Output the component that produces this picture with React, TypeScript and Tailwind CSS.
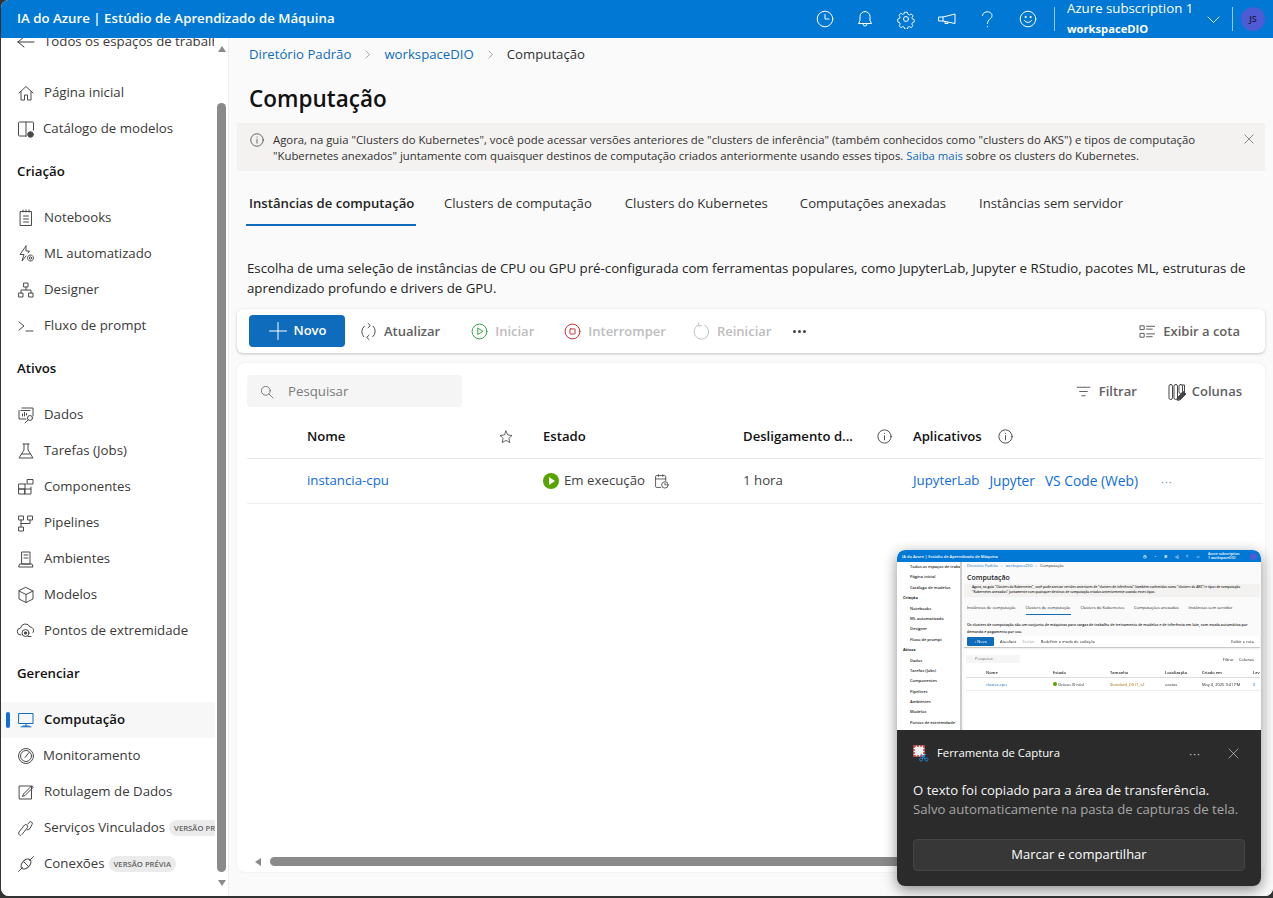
import React from 'react'

type IconProps = { size?: number; className?: string; children?: React.ReactNode }

const Svg: React.FC<IconProps> = ({ size = 20, className, children }) => (
  <svg
    width={size}
    height={size}
    viewBox="0 0 20 20"
    fill="none"
    stroke="currentColor"
    strokeWidth={1}
    strokeLinecap="round"
    strokeLinejoin="round"
    className={`shrink-0 ${className || ''}`}
  >
    {children}
  </svg>
)

const icons: Record<string, React.ReactNode> = {
  back: <path d="M2 10h16M2 10l6-5M2 10l6 5" />,
  home: <path d="M3 10 10 3.500 17 10M5 8.500V17h3.500v-5h3v5H15V8.500" />,
  catalog: (
    <>
      <path d="M10 17H3.500a1 1 0 0 1-1-1V4a1 1 0 0 1 1-1H10v14ZM10 3h6.500a1 1 0 0 1 1 1v7" />
      <circle cx="14.500" cy="15.500" r="2.800" fill="currentColor" />
    </>
  ),
  notebook: <path d="M4.500 3.500h11v14h-11zM7 2v2M10 2v2M13 2v2M7.500 8h5M7.500 11h5M7.500 14h5" />,
  ml: (
    <>
      <path d="M10 2 4 10.500h4L6 17l4-5M10 2v5h3.500l-1.500 2" />
      <circle cx="14.500" cy="14" r="1.200" />
      <circle cx="14.500" cy="14" r="3" strokeDasharray="1.500 0.800" />
    </>
  ),
  designer: <path d="M8 3h4v4H8zM3 13h4v4H3zM13 13h4v4h-4zM10 7v3M5 13v-3h10v3" />,
  prompt: <path d="m3 6 5 4-5 4M10 15h7" />,
  dados: (
    <>
      <path d="M6 3h11v8M3 5.500V14h7M5 5.500h9" />
      <path d="M6.500 11V9M8.500 11V7.500M10.500 10V8.500" />
      <circle cx="14" cy="13" r="2.500" />
      <path d="m12 15-3 3" />
    </>
  ),
  flask: <path d="M7 3h6M8 3v6l-5 8h14l-5-8V3M5.500 13h9" />,
  components: <path d="M3 7h6v5H3zM3 12h6v5H3zM9 12h6v5H9zM15 12v-2M11.500 2.500h5.500v4.500h-5.500zM9 7h1" />,
  pipelines: <path d="M3 3h4.500v4H3zM12 3h4.500v4H12zM3 14h4.500v4H3zM5 7v7M5 10.500h9V7" />,
  env: <path d="M6 3h8v12H6zM4 15h12l1 3H3zM8 6h4M8 9h4" />,
  cube: <path d="M10 2.500 17 6v8l-7 3.500L3 14V6zM3 6l7 3.500L17 6M10 9.500v8" />,
  endpoint: (
    <>
      <path d="M5 14a3.500 3.500 0 0 1-.5-7A5 5 0 0 1 14 6a3.500 3.500 0 0 1 3 5.500" />
      <circle cx="9.500" cy="12" r="3.500" />
      <circle cx="9.500" cy="12" r="1.200" fill="currentColor" />
      <path d="M12 15.500h3" />
    </>
  ),
  compute: <path d="M3 3.500h14v10H3zM10 13.500V16M5 16.800h10M7 16h6" />,
  gauge: (
    <>
      <circle cx="10" cy="10" r="7.500" />
      <circle cx="10" cy="10" r="5.500" />
      <path d="m9 11.500 4-5" />
    </>
  ),
  label: <path d="M3.500 4h12v13h-12zM15.500 4 7.500 12l-1 2.500 2.500-1L17 5.500z" />,
  linked: <path d="M4.500 17.500a2.200 2.200 0 0 1-1.500-3.500l5.500-7a2 2 0 0 1 3 2.500l-5.500 7M11 12l3-1.500 2-4a1.800 1.800 0 0 0-3-2l-1 1.500" />,
  plug: (
    <>
      <path d="M2.500 17.500 6.500 13.500M13.500 6.500l4-4" />
      <ellipse cx="10" cy="10" rx="6" ry="3.800" transform="rotate(-45 10 10)" />
      <path d="M8 8l4 4" />
    </>
  ),
  clock: (
    <>
      <circle cx="10" cy="10" r="7.800" />
      <path d="M10 5.500V10h4" />
    </>
  ),
  bell: <path d="M10 2.500a5 5 0 0 0-5 5v4L3.500 14.500h13L15 11.500v-4a5 5 0 0 0-5-5ZM8 15a2 2 0 0 0 4 0" />,
  gear: (
    <>
      <circle cx="10" cy="10" r="2.500" />
      <path d="M8.500 2.500h3l.5 2.200 1.800.8 2-1.200 2 2.200-1.200 2 .5 1.500 2 .6v2.800l-2 .6-.6 1.600 1.200 2-2.100 2-2-1.200-1.600.7-.5 2.100h-3l-.5-2.100-1.600-.7-2 1.200-2.100-2 1.200-2-.6-1.600-2-.6V9.900l2-.6.5-1.500-1.200-2 2-2.200 2 1.200 1.800-.8z" transform="translate(1 1) scale(.9)" />
    </>
  ),
  megaphone: <path d="M2 8h4L18 5v9.500L6 12H2zM6 8v4M8 12.500v2h3v-1.200" />,
  help: <path d="M5.500 6.500C5.500 1.500 15 1.500 15 6.500c0 3.500-4.500 3.500-4.500 8M10.500 17.500v.3" />,
  smile: (
    <>
      <circle cx="10" cy="10" r="7.800" />
      <path d="M6.500 11.500c1.800 2.600 5.200 2.600 7 0" />
      <circle cx="7.500" cy="8" r=".6" fill="currentColor" />
      <circle cx="12.500" cy="8" r=".6" fill="currentColor" />
    </>
  ),
  chevron: <path d="m3.500 7 6.500 6.500L16.500 7" />,
  plus: <path d="M10 1.500v17M1.500 10h17" />,
  refresh: (
    <>
      <path d="M5.500 4.500a7.500 7.500 0 0 0-.5 11M14.500 15.500a7.500 7.500 0 0 0 .5-11" />
      <path d="M9.500 1.500 12 3.800 9.500 6M10.500 14 8 16.200l2.500 2.300" />
    </>
  ),
  start: (
    <>
      <circle cx="10" cy="10" r="7.800" />
      <path d="M8.200 6.800v6.400l5-3.200z" />
    </>
  ),
  stop: (
    <>
      <circle cx="10" cy="10" r="7.800" />
      <rect x="7.300" y="7.300" width="5.400" height="5.400" rx=".6" />
    </>
  ),
  restart: <path d="M7 3a7.800 7.800 0 1 0 6.500.3M7 1v3h3" />,
  quota: <path d="M2.500 4h4v4h-4zM2.500 12h4v4h-4zM9 4.500h8.500M9 7.500h6M9 12.500h8.500M9 15.500h6" />,
  search: (
    <>
      <circle cx="8.500" cy="8.500" r="5.500" />
      <path d="m12.500 12.500 5 5" />
    </>
  ),
  filter: <path d="M2.500 5h15M5.500 10h9M8 15h4" />,
  columns: (
    <>
      <rect x="2" y="2.500" width="3.500" height="15" rx="1.700" />
      <rect x="7" y="2.500" width="3.500" height="15" rx="1.700" />
      <rect x="12" y="2.500" width="3.500" height="9" rx="1.700" />
      <path d="M15.500 3h2v8" />
      <path d="m10.500 18 .5-3 5.500-5.500 2.500 2.500-5.500 5.500z" fill="currentColor" />
    </>
  ),
  star: <path d="m10 2.500 2.300 5 5.200.6-3.900 3.500 1.100 5.400L10 14.200 5.300 17l1.100-5.400-3.900-3.500 5.200-.6z" />,
  info: (
    <>
      <circle cx="10" cy="10" r="7.800" />
      <path d="M10 9v5M10 6.200v.2" />
    </>
  ),
  close: <path d="m3 3 14 14M17 3 3 17" />,
  schedule: (
    <>
      <path d="M9 17H4.500a1.500 1.500 0 0 1-1.500-1.500v-11A1.500 1.500 0 0 1 4.500 3h9A1.500 1.500 0 0 1 15 4.500V9M3 7h12M6.500 2v2M11.500 2v2" />
      <circle cx="14" cy="14" r="3.800" />
      <path d="M14 12v2h1.800" />
    </>
  ),
}

const Icon: React.FC<{ name: string; size?: number; className?: string }> = ({ name, size, className }) => (
  <Svg size={size} className={className}>
    {icons[name]}
  </Svg>
)

const NavItem: React.FC<{ icon: string; label: string; badge?: boolean; active?: boolean; tight?: boolean }> = ({
  icon,
  label,
  badge,
  active,
  tight,
}) => (
  <div className={`relative flex h-9 items-center overflow-hidden whitespace-nowrap pl-[15px] ${active ? 'bg-[#f7f7f7] font-semibold text-[#111]' : 'text-[#3b3a39]'}`}>
    {active && <div className="absolute left-[5px] top-[10px] h-4 w-1 rounded-sm bg-[#0f6cdb]" />}
    <Icon name={icon} className={active ? 'text-[#0f6cbd]' : 'text-[#4a4a4a]'} />
    <span className={tight ? 'ml-[7px]' : 'ml-2'}>{label}</span>
    {badge && (
      <span className="ml-[4px] shrink-0 rounded-full bg-[#ebebeb] px-[5px] text-[7.700px] font-semibold leading-[16px] text-[#616161]">
        VERSÃO PRÉVIA
      </span>
    )}
  </div>
)

const SectionTitle: React.FC<{ title: string }> = ({ title }) => (
  <div className="mb-[16px] mt-[12px] flex h-[25px] items-center pl-4 font-semibold text-[#111]">{title}</div>
)

const Sidebar = () => (
  <aside className="flex w-[228px] shrink-0 overflow-hidden border-r border-[#ececec] bg-white">
    <nav className="w-[214px] shrink-0 overflow-hidden">
      <div className="mt-[-14px] flex h-9 items-center whitespace-nowrap pl-[15px] text-[#3b3a39]">
        <Icon name="back" />
        <span className="ml-2 w-[170px] shrink-0 overflow-hidden">Todos os espaços de trabalho</span>
      </div>
      <div className="mt-[15px]">
        <NavItem icon="home" label="Página inicial" />
        <NavItem icon="catalog" label="Catálogo de modelos" tight />
      </div>
      <SectionTitle title="Criação" />
      <NavItem icon="notebook" label="Notebooks" />
      <NavItem icon="ml" label="ML automatizado" />
      <NavItem icon="designer" label="Designer" />
      <NavItem icon="prompt" label="Fluxo de prompt" />
      <SectionTitle title="Ativos" />
      <NavItem icon="dados" label="Dados" />
      <NavItem icon="flask" label="Tarefas (Jobs)" />
      <NavItem icon="components" label="Componentes" />
      <NavItem icon="pipelines" label="Pipelines" />
      <NavItem icon="env" label="Ambientes" />
      <NavItem icon="cube" label="Modelos" />
      <NavItem icon="endpoint" label="Pontos de extremidade" />
      <SectionTitle title="Gerenciar" />
      <NavItem icon="compute" label="Computação" active />
      <NavItem icon="gauge" label="Monitoramento" tight />
      <NavItem icon="label" label="Rotulagem de Dados" />
      <NavItem icon="linked" label="Serviços Vinculados" badge />
      <NavItem icon="plug" label="Conexões" badge />
    </nav>
    {/* page scrollbar */}
    <div className="ml-[2px] flex w-[9px] flex-col items-center">
      <div className="mt-[8px] h-0 w-0 border-x-[4.500px] border-b-[6px] border-x-transparent border-b-[#8a8a8a]" />
      <div className="mt-[51px] h-[769px] w-[9px] rounded-full bg-[#8a8a8a]" />
      <div className="mt-[8px] h-0 w-0 border-x-[4.500px] border-t-[6px] border-x-transparent border-t-[#8a8a8a]" />
    </div>
  </aside>
)

const ToolButton: React.FC<{ icon: string; label: string; iconClass: string; textClass: string }> = ({
  icon,
  label,
  iconClass,
  textClass,
}) => (
  <div className={`flex items-center gap-[6px] text-[13px] font-semibold ${textClass}`}>
    <Icon name={icon} size={19} className={iconClass} />
    <span>{label}</span>
  </div>
)

const Dots = () => (
  <span className="ml-[22px] flex gap-[2px]">
    <span className="h-[3px] w-[3px] rounded-full bg-[#424242]" />
    <span className="h-[3px] w-[3px] rounded-full bg-[#424242]" />
    <span className="h-[3px] w-[3px] rounded-full bg-[#424242]" />
  </span>
)

const MainPanel = () => (
  <main className="flex min-w-0 flex-1 flex-col bg-[#fafafa] pl-2 pr-2 text-[#323130]">
    <div className="flex h-[32px] items-center pl-3 pt-[1px] text-[13.200px]">
      <span className="text-[#0f6cbd]">Diretório Padrão</span>
      <Icon name="chevron" size={11} className="mx-[11px] -rotate-90 text-[#605e5c]" />
      <span className="text-[#0f6cbd]">workspaceDIO</span>
      <Icon name="chevron" size={11} className="mx-[11px] -rotate-90 text-[#605e5c]" />
      <span>Computação</span>
    </div>
    <h1 className="mt-[11px] h-[42px] pl-3 text-[22.500px] font-semibold leading-[36px] text-[#111]">Computação</h1>

    <div className="flex h-[48px] items-start bg-[#f3f2f1] pl-3 pr-[10px] pt-[9px] text-[11.350px] leading-[16px]">
      <Icon name="info" size={16} className="shrink-0 text-[#444]" />
      <p className="ml-2 w-[940px]">
        Agora, na guia "Clusters do Kubernetes", você pode acessar versões anteriores de "clusters de inferência" (também conhecidos como "clusters do AKS") e tipos de computação "Kubernetes anexados" juntamente com quaisquer destinos de computação criados anteriormente usando esses tipos. <span className="text-[#0f6cbd]">Saiba mais</span> sobre os clusters do Kubernetes.
      </p>
      <Icon name="close" size={12} className="ml-auto mt-[1px] text-[#444]" />
    </div>

    <div className="mt-[13px] flex h-[42px] items-start pl-[9px] text-[13.150px]">
      <div className="h-[42px] w-[170px] whitespace-nowrap border-b-2 border-[#0f6cbd] pl-[3px] pt-[10px] font-semibold text-[#242424]">Instâncias de computação</div>
      <div className="ml-[28px] pt-[10px]">Clusters de computação</div>
      <div className="ml-[33px] pt-[10px]">Clusters do Kubernetes</div>
      <div className="ml-[32px] pt-[10px]">Computações anexadas</div>
      <div className="ml-[33px] pt-[10px]">Instâncias sem servidor</div>
    </div>

    <p className="mt-[32px] w-[1015px] pl-[10px] leading-[20px] text-[#242424]">
      Escolha de uma seleção de instâncias de CPU ou GPU pré-configurada com ferramentas populares, como JupyterLab, Jupyter e RStudio, pacotes ML, estruturas de aprendizado profundo e drivers de GPU.
    </p>

    <div className="mt-[11px] flex h-[44px] items-center rounded-md bg-white pl-3 pr-[25px] pt-[1px] shadow-[0_1px_3px_rgba(0,0,0,0.22)]">
      <div className="mt-[-1px] flex h-8 w-[96px] items-center justify-center gap-[6px] rounded bg-[#0f6cbd] text-[13px] font-semibold text-white">
        <Icon name="plus" />
        <span>Novo</span>
      </div>
      <ToolButton icon="refresh" label="Atualizar" iconClass="text-[#424242]" textClass="ml-[14px] text-[#616161]" />
      <ToolButton icon="start" label="Iniciar" iconClass="text-[#2e9e3f]" textClass="ml-[30px] text-[#bdbdbd]" />
      <ToolButton icon="stop" label="Interromper" iconClass="text-[#c4262e]" textClass="ml-[29px] text-[#bdbdbd]" />
      <ToolButton icon="restart" label="Reiniciar" iconClass="text-[#bdbdbd]" textClass="ml-[26px] text-[#bdbdbd]" />
      <Dots />
      <ToolButton icon="quota" label="Exibir a cota" iconClass="text-[#555]" textClass="ml-auto text-[#616161]" />
    </div>

    <section className="relative mt-[10px] flex h-[509px] flex-col rounded-lg bg-white pl-[10px] pr-[2px] shadow-[0_0_2px_rgba(0,0,0,0.1)]">
      <div className="mt-3 flex h-8 items-center">
        <div className="flex h-8 w-[215px] items-center gap-[13px] rounded bg-[#f5f5f5] pl-[12px] pt-[1px] text-[#7a7a7a]">
          <Icon name="search" size={16} className="text-[#616161]" />
          <span>Pesquisar</span>
        </div>
        <div className="ml-auto mr-[21px] flex items-center gap-[30px] pt-[1px] text-[13px] font-semibold text-[#616161]">
          <div className="flex items-center gap-[7px]"><Icon name="filter" size={17} className="text-[#444]" />Filtrar</div>
          <div className="flex items-center gap-[5px]"><Icon name="columns" className="text-[#444]" />Colunas</div>
        </div>
      </div>

      <div className="mt-[13px] flex h-[39px] items-center border-b border-[#e8e8e8] pb-[4px] pl-[60px] text-[13.150px] font-semibold text-[#111]">
        <div className="flex w-[236px] items-center">
          <span>Nome</span>
          <Icon name="star" size={16} className="ml-[153px] text-[#424242]" />
        </div>
        <div className="w-[200px]">Estado</div>
        <div className="flex w-[170px] items-center">
          <span className="w-[133px] whitespace-nowrap">Desligamento d...</span>
          <Icon name="info" size={17} className="text-[#333]" />
        </div>
        <div className="flex items-center">
          <span>Aplicativos</span>
          <Icon name="info" size={17} className="ml-[15px] text-[#333]" />
        </div>
      </div>

      <div className="flex h-[45px] items-center border-b border-[#eeeeee] pl-[60px] text-[#424242]">
        <div className="w-[236px] text-[#0f6cdb]">instancia-cpu</div>
        <div className="flex w-[200px] items-center">
          <span className="flex h-4 w-4 items-center justify-center rounded-full bg-[#57a300]">
            <span className="ml-[2px] h-0 w-0 border-y-[4px] border-l-[6px] border-y-transparent border-l-white" />
          </span>
          <span className="ml-[5px]">Em execução</span>
          <Icon name="schedule" size={17} className="ml-[8px] text-[#444]" />
        </div>
        <div className="w-[170px]">1 hora</div>
        <div className="flex items-center text-[#0f6cdb]">
          <span>JupyterLab</span>
          <span className="ml-[10px] text-[13.700px]">Jupyter</span>
          <span className="ml-[10px] text-[13.800px]">VS Code (Web)</span>
          <span className="ml-[23px] text-[11px] leading-none tracking-[1px] text-[#6b8fc9]">···</span>
        </div>
      </div>

      <div className="mb-[6px] mt-auto flex h-[9px] items-center">
        <div className="ml-[8px] h-0 w-0 border-y-[4.500px] border-r-[6px] border-y-transparent border-r-[#8a8a8a]" />
        <div className="ml-[9px] h-[9px] w-[960px] rounded-full bg-[#8a8a8a]" />
      </div>
    </section>
  </main>
)

const MiniNav = ['Todos os espaços de trabalho', 'Página inicial', 'Catálogo de modelos', '*Criação', 'Notebooks', 'ML automatizado', 'Designer', 'Fluxo de prompt', '*Ativos', 'Dados', 'Tarefas (Jobs)', 'Componentes', 'Pipelines', 'Ambientes', 'Modelos', 'Pontos de extremidade']

const Thumbnail = () => (
  <div className="flex h-[180px] flex-col overflow-hidden rounded-t-lg bg-white text-[4px] leading-[5px] text-[#222] blur-[0.45px]">
    <div className="flex h-[12px] shrink-0 items-center bg-[#0078d4] pl-[5px] pr-[4px] font-semibold text-white">
      <span>IA do Azure | Estúdio de Aprendizado de Máquina</span>
      <div className="ml-auto flex items-center gap-[8px]">
        <span>◷</span><span>◔</span><span>✲</span><span>◁</span><span>?</span><span>☺</span>
        <span className="w-[34px] text-[3.500px] leading-[4px]">Azure subscription 1 workspaceDIO</span>
        <span className="h-[7px] w-[7px] rounded-full bg-[#4f5bd5]" />
      </div>
    </div>
    <div className="flex min-h-0 flex-1">
      <div className="w-[65px] shrink-0 overflow-hidden border-r-2 border-[#ccc] pl-[6px] font-semibold">
        {MiniNav.map((item) => (
          <div key={item} className={`h-[10.400px] whitespace-nowrap leading-[10px] ${item[0] === '*' ? 'font-bold' : 'pl-[7px]'}`}>
            {item.replace('*', '')}
          </div>
        ))}
      </div>
      <div className="min-w-0 flex-1 bg-[#fafafa] pl-[2px] pr-[1px] font-medium">
        <div className="h-[8px] pl-[3px] pt-[1px] text-[#0f6cbd]">Diretório Padrão &nbsp; › &nbsp; workspaceDIO &nbsp; › &nbsp; <span className="text-[#222]">Computação</span></div>
        <div className="mt-[2px] h-[12px] pl-[3px] text-[7px] font-semibold leading-[12px]">Computação</div>
        <div className="h-[13px] overflow-hidden bg-[#f3f2f1] pl-[8px] pt-[1px] text-[3.200px] font-semibold leading-[4.500px]">
          Agora, na guia "Clusters do Kubernetes", você pode acessar versões anteriores de "clusters de inferência" (também conhecidos como "clusters do AKS") e tipos de computação "Kubernetes anexados" juntamente com quaisquer destinos de computação criados anteriormente usando esses tipos.
        </div>
        <div className="mt-[8px] flex h-[12px] gap-[10px] pl-[3px]">
          <span>Instâncias de computação</span>
          <span className="h-[10px] border-b border-[#0f6cbd]">Clusters de computação</span>
          <span>Clusters do Kubernetes</span>
          <span>Computações anexadas</span>
          <span>Instâncias sem servidor</span>
        </div>
        <div className="mt-[5px] h-[14px] overflow-hidden pl-[3px] text-[3.600px] font-semibold leading-[6.500px]">
          Os clusters de computação são um conjunto de máquinas para cargas de trabalho de treinamento de modelos e de inferência em lote, com escala automática por demanda e pagamento por uso.
        </div>
        <div className="flex h-[11px] items-center gap-[6px] bg-white pl-[3px] shadow-[0_1px_1px_rgba(0,0,0,0.2)]">
          <span className="h-[9px] w-[27px] rounded-[1px] bg-[#0f6cbd] text-center leading-[9px] text-white">+ Novo</span>
          <span>Atualizar</span>
          <span className="text-[#aaa]">Excluir</span>
          <span>Redefinir o modo de exibição</span>
          <span className="ml-auto pr-[6px]">Exibir a cota</span>
        </div>
        <div className="mt-[3px] h-[80px] bg-white pl-[2px]">
          <div className="flex items-center pt-[5px]">
            <span className="h-[8px] w-[54px] bg-[#f5f5f5] pl-[9px] leading-[8px] text-[#777]">Pesquisar</span>
            <span className="ml-auto pr-[6px]">Filtrar &nbsp; &nbsp; Colunas</span>
          </div>
          <div className="mt-[4px] flex h-[11px] items-center border-b border-[#ddd] pl-[20px] font-semibold">
            <span className="w-[67px]">Nome</span>
            <span className="w-[57px]">Estado</span>
            <span className="w-[55px]">Tamanho</span>
            <span className="w-[37px]">Localização</span>
            <span className="w-[51px]">Criado em</span>
            <span>Lev</span>
          </div>
          <div className="flex h-[13px] items-center border-b border-[#eee] pl-[20px]">
            <span className="w-[67px] text-[#0f6cbd]">cluster-cpu</span>
            <span className="flex w-[57px] items-center gap-[1px]"><span className="h-[4px] w-[4px] rounded-full bg-[#57a300]" />Ocioso (0 nós)</span>
            <span className="w-[55px] text-[#a06a00]">Standard_DS11_v2</span>
            <span className="w-[37px]">eastus</span>
            <span className="w-[51px]">May 4, 2025 9:41 PM</span>
            <span className="text-[#0f6cbd]">0</span>
          </div>
        </div>
      </div>
    </div>
  </div>
)

const SnipToast = () => (
  <div className="absolute left-[897px] top-[550px] w-[364px] overflow-hidden rounded-lg shadow-[0_4px_14px_rgba(0,0,0,0.45)]">
    <Thumbnail />
    <div className="h-[156px] bg-[#2b2b2b] pl-4 pr-4 text-white">
      <div className="flex h-[46px] items-center pt-[1px] text-[11.300px]">
        <svg width="17" height="17" viewBox="0 0 17 17" className="shrink-0">
          <rect x="0.500" y="0.500" width="11" height="11" fill="#f1f1f1" />
          <path d="M1 1h10M1 1v10M11 1v10M1 11h10" stroke="#d13438" strokeWidth="1.500" strokeDasharray="2 1" />
          <path d="m8 9 4 5M13 9l-4 5" stroke="#1a86d9" strokeWidth="1.200" />
          <circle cx="13.500" cy="14.500" r="1.500" fill="none" stroke="#1a86d9" />
          <circle cx="8" cy="14.500" r="1.500" fill="none" stroke="#1a86d9" />
        </svg>
        <span className="ml-[7px]">Ferramenta de Captura</span>
        <span className="ml-auto text-[11px] leading-none tracking-[1px] text-[#cfcfcf]">···</span>
        <Icon name="close" size={13} className="ml-[26px] mr-[5px] text-[#d8d8d8]" />
      </div>
      <p className="mt-[5px] text-[13.150px] leading-[19px] text-[#f5f5f5]">O texto foi copiado para a área de transferência.</p>
      <p className="whitespace-nowrap text-[13.200px] leading-[19px] text-[#a6a6a6]">Salvo automaticamente na pasta de capturas de tela.</p>
      <div className="mt-[20px] flex h-8 items-center justify-center rounded border border-[#454545] bg-[#373737] text-[13px]">
        Marcar e compartilhar
      </div>
    </div>
  </div>
)

export default function App() {
  return (
    <div className="relative h-[898px] w-[1273px] overflow-hidden bg-[#333] pb-[2px] pl-px font-['Open_Sans',sans-serif] text-[13.250px]">
      <div className="flex h-full flex-col overflow-hidden rounded-b-lg rounded-tl-lg bg-white">
        <header className="flex h-[38px] shrink-0 items-center bg-[#0078d4] pl-4 text-white">
          <span className="font-semibold">IA do Azure | Estúdio de Aprendizado de Máquina</span>
          <div className="ml-auto flex items-center">
            <div className="flex w-[40.600px] justify-center"><Icon name="clock" /></div>
            <div className="flex w-[40.600px] justify-center"><Icon name="bell" /></div>
            <div className="flex w-[40.600px] justify-center"><Icon name="gear" /></div>
            <div className="flex w-[40.600px] justify-center"><Icon name="megaphone" /></div>
            <div className="flex w-[40.600px] justify-center"><Icon name="help" /></div>
            <div className="flex w-[40.600px] justify-center"><Icon name="smile" /></div>
            <div className="ml-[6px] h-6 w-px bg-[#9cc8ea]" />
            <div className="ml-3 w-[128px] whitespace-nowrap pb-[2px]">
              <div className="mb-[3px] leading-[17px]">Azure subscription 1</div>
              <div className="text-[11.200px] font-bold leading-[17px]">workspaceDIO</div>
            </div>
            <Icon name="chevron" size={17} className="ml-[10px]" />
            <div className="ml-[10px] h-6 w-px bg-[#9cc8ea]" />
            <div className="ml-[8px] mr-[8px] flex h-6 w-6 items-center justify-center rounded-full bg-[#4f5bd5] text-[9px] font-semibold text-[#1b1a3a]">JS</div>
          </div>
        </header>
        <div className="flex min-h-0 flex-1">
          <Sidebar />
          <MainPanel />
        </div>
      </div>
      <SnipToast />
    </div>
  )
}
